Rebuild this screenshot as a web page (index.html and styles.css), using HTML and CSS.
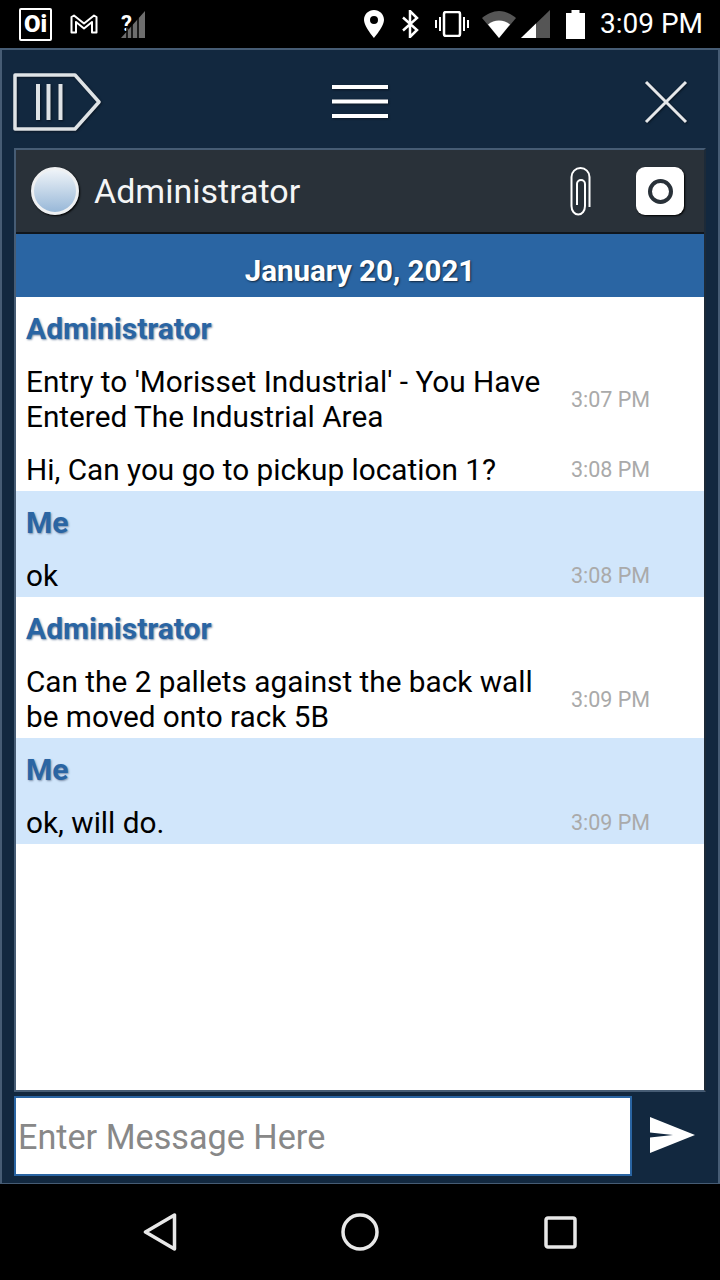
FILE: index.html
```html
<!DOCTYPE html>
<html lang="en">
<head>
    <meta charset="UTF-8">
    <meta name="viewport" content="width=device-width, initial-scale=1.0">
    <title>Messages</title>
    <link rel="stylesheet" href="styles.css">
</head>
<body>
    <div class="status-bar">
        <div class="status-left">
            <div class="oi-badge"><span class="oi-text">Oi</span></div>
            <svg class="icon-gmail" width="28" height="20" viewBox="0 0 28 20"><path d="M1.500 18.500V3L4 1.500 14 9.500 24 1.500 26.500 3V18.500H22V8L14 14.500 6 8V18.500Z" fill="none" stroke="#fff" stroke-width="2" stroke-linejoin="round"/></svg>
            <span class="nosim-mark">?</span>
            <svg class="icon-nosim" width="25" height="28" viewBox="0 0 25 28"><polygon points="1,28 25,1 25,28" fill="#6e6e6e"/><g stroke="#000" stroke-width="1.500"><line x1="7" y1="28" x2="7" y2="18"/><line x1="12" y1="28" x2="12" y2="14"/><line x1="18" y1="28" x2="18" y2="8"/></g></svg>
        </div>
        <div class="status-right">
            <svg width="20" height="28" viewBox="0 0 20 28"><path fill-rule="evenodd" d="M10 0C4.500 0 0 4.300 0 9.800 0 16.500 10 28 10 28S20 16.500 20 9.800C20 4.300 15.500 0 10 0ZM10 6A4 4 0 1 1 10 14 4 4 0 0 1 10 6Z" fill="#fff"/></svg>
            <svg class="gap-bt" width="18" height="28" viewBox="0 0 18 28"><path d="M2 7.500 16 20 9 27V1L16 8 2 20.500" fill="none" stroke="#fff" stroke-width="2.500"/></svg>
            <svg class="gap-vib" width="36" height="26" viewBox="0 0 36 26"><rect x="10" y="1" width="16" height="24" rx="2" fill="none" stroke="#fff" stroke-width="2.500"/><path d="M1 9H3V17H1ZM5 6H7V20H5ZM29 6H31V20H29ZM33 9H35V17H33Z" fill="#fff"/></svg>
            <svg class="gap-wifi" width="34" height="27" viewBox="0 0 34 27"><path d="M17 27 0 7C5 3 11 0 17 0S29 3 34 7Z" fill="#555"/><path d="M17 27 6 13.500C9 11 13 9.500 17 9.500S25 11 28 13.500Z" fill="#fff"/></svg>
            <svg class="gap-signal" width="29" height="28" viewBox="0 0 29 28"><polygon points="0,28 29,0 29,28" fill="#555"/><polygon points="0,28 15,13.500 15,28" fill="#fff"/></svg>
            <svg class="gap-batt" width="19" height="29" viewBox="0 0 19 29"><path d="M5.500 0H13.500V3H19V29H0V3H5.500Z" fill="#fff"/></svg>
            <span class="clock">3:09 PM</span>
        </div>
    </div>

    <div class="app">
        <div class="toolbar">
            <svg class="tool-tab" width="88" height="58" viewBox="0 0 88 58"><path d="M2 2H62L86 29 62 56H2Z" fill="none" stroke="#dfe3e6" stroke-width="3.500" stroke-linejoin="round"/><path d="M25 11V47M35.500 11V47M47.500 11V47" stroke="#dfe3e6" stroke-width="4"/></svg>
            <svg class="tool-menu" width="56" height="34" viewBox="0 0 56 34"><path d="M0 2H56M0 16.500H56M0 31H56" stroke="#fff" stroke-width="4"/></svg>
            <svg class="tool-close" width="44" height="44" viewBox="0 0 44 44"><path d="M2 2 42 42M42 2 2 42" stroke="#e6e8ea" stroke-width="3"/></svg>
        </div>

        <div class="chat-panel">
            <div class="chat-header">
                <div class="avatar"></div>
                <div class="chat-title">Administrator</div>
                <svg class="clip" width="21" height="49" viewBox="0 0 21 49"><path d="M19.500 40V10A9 9 0 0 0 1.500 10V39A6.700 8.500 0 0 0 15 39V17A4 4 0 0 0 7 17V38" fill="none" stroke="#fff" stroke-width="2"/></svg>
                <div class="camera-btn"><div class="camera-lens"></div></div>
            </div>
            <div class="date-bar">January 20, 2021</div>

            <div class="messages">
                <div class="group">
                    <div class="sender">Administrator</div>
                    <div class="msg"><div class="msg-text">Entry to 'Morisset Industrial' - You Have Entered The Industrial Area</div><div class="msg-time">3:07 PM</div></div>
                    <div class="msg"><div class="msg-text">Hi, Can you go to pickup location 1?</div><div class="msg-time">3:08 PM</div></div>
                </div>
                <div class="group mine">
                    <div class="sender">Me</div>
                    <div class="msg"><div class="msg-text">ok</div><div class="msg-time">3:08 PM</div></div>
                </div>
                <div class="group">
                    <div class="sender">Administrator</div>
                    <div class="msg"><div class="msg-text">Can the 2 pallets against the back wall be moved onto rack 5B</div><div class="msg-time">3:09 PM</div></div>
                </div>
                <div class="group mine">
                    <div class="sender">Me</div>
                    <div class="msg"><div class="msg-text">ok, will do.</div><div class="msg-time">3:09 PM</div></div>
                </div>
            </div>
        </div>

        <div class="composer">
            <input class="message-input" type="text" placeholder="Enter Message Here">
            <svg class="send" width="46" height="36" viewBox="0 0 46 36"><path d="M1 0 46 18 1 36V20.500L24 18 1 15.500Z" fill="#fff"/></svg>
        </div>
    </div>

    <div class="nav-bar">
        <div class="nav-item"><svg width="34" height="38" viewBox="0 0 34 38"><path d="M31.500 2V36L2.500 19Z" fill="none" stroke="#e8e8e8" stroke-width="3.500" stroke-linejoin="round"/></svg></div>
        <div class="nav-item"><svg width="38" height="38" viewBox="0 0 38 38"><circle cx="19" cy="19" r="17" fill="none" stroke="#e8e8e8" stroke-width="3.500"/></svg></div>
        <div class="nav-item"><svg width="33" height="33" viewBox="0 0 33 33"><rect x="2" y="2" width="29" height="29" rx="2" fill="none" stroke="#e8e8e8" stroke-width="3.500"/></svg></div>
    </div>
</body>
</html>
```

FILE: styles.css
```css
* {
    box-sizing: border-box;
}

body {
    font-family: Roboto, "Liberation Sans", sans-serif;
    background-color: #000;
    margin: 0;
    width: 720px;
    height: 1280px;
    display: flex;
    flex-direction: column;
    overflow: hidden;
}

/* status bar */
.status-bar {
    height: 48px;
    flex: none;
    display: flex;
    justify-content: space-between;
    align-items: center;
    padding: 0 17px 0 19px;
    background-color: #000;
}

.status-left,
.status-right {
    display: flex;
    align-items: center;
}

.oi-badge {
    width: 33px;
    height: 33px;
    border: 2px solid #fff;
    border-radius: 2px;
    display: flex;
    align-items: center;
    justify-content: center;
}

.oi-text {
    color: #fff;
    font-size: 24px;
    font-weight: 900;
    line-height: 1;
}

.icon-gmail {
    margin-left: 18px;
}

.nosim-mark {
    margin-left: 23px;
    align-self: flex-start;
    color: #fff;
    font-size: 22px;
    font-weight: 700;
    line-height: 36px;
}

.icon-nosim {
    margin-left: -12px;
}

.gap-bt {
    margin-left: 17px;
}

.gap-vib {
    margin-left: 15px;
}

.gap-wifi {
    margin-left: 12px;
}

.gap-signal {
    margin-left: 5px;
}

.gap-batt {
    margin-left: 16px;
}

.clock {
    margin-left: 15px;
    color: #fff;
    font-size: 28px;
    line-height: 1;
}

/* app frame */
.app {
    height: 1136px;
    flex: none;
    background-color: #12283f;
    border: 2px solid #465c74;
    border-bottom-width: 1px;
    display: flex;
    flex-direction: column;
}

.toolbar {
    height: 98px;
    flex: none;
    display: grid;
    grid-template-columns: 1fr auto 1fr;
    align-items: center;
    padding: 6px 11px 0 11px;
}

.toolbar svg {
    filter: drop-shadow(1px 1px 1px #0a1624);
}

.tool-close {
    justify-self: end;
    margin-right: 19px;
}

.chat-panel {
    height: 944px;
    flex: none;
    margin: 0 12px;
    background-color: #fff;
    border: 2px solid #465c74;
    border-right-color: #1c2a38;
    display: flex;
    flex-direction: column;
}

.chat-header {
    height: 84px;
    flex: none;
    background-color: #293139;
    border-bottom: 2px solid #10161c;
    display: flex;
    align-items: center;
    padding: 0 20px 0 15px;
}

.avatar {
    width: 48px;
    height: 48px;
    border-radius: 50%;
    border: 3px solid #eef0f2;
    background: linear-gradient(#eef3f8, #98b8d8);
    box-shadow: 1px 1px 2px #000;
}

.chat-title {
    margin-left: 15px;
    flex: 1;
    color: #f4f5f6;
    font-size: 34px;
}

.clip {
    margin-right: 45px;
}

.camera-btn {
    width: 48px;
    height: 48px;
    border-radius: 9px;
    background-color: #fff;
    box-shadow: 1px 1px 2px #000;
    display: flex;
    align-items: center;
    justify-content: center;
}

.camera-lens {
    width: 25px;
    height: 25px;
    border-radius: 50%;
    border: 4px solid #293139;
}

.date-bar {
    height: 63px;
    flex: none;
    background-color: #2a65a3;
    color: #fff;
    font-size: 29.5px;
    font-weight: 700;
    text-align: center;
    line-height: 74px;
    text-shadow: 1px 1px 2px #12283f;
}

/* message list */
.group {
    padding: 15px 54px 4px 10px;
    display: flex;
    flex-direction: column;
    gap: 18px;
}

.mine {
    background-color: #d1e6fb;
}

.sender {
    height: 34px;
    line-height: 34px;
    color: #2a65a3;
    font-size: 30px;
    font-weight: 700;
    text-shadow: 1px 1px 2px #7d8fa8;
}

.msg {
    display: flex;
    align-items: center;
}

.msg-text {
    width: 530px;
    color: #000;
    font-size: 29.75px;
    line-height: 35px;
}

.msg-time {
    margin-left: auto;
    color: #aaa;
    font-size: 21.5px;
    white-space: nowrap;
}

/* composer */
.composer {
    flex: 1;
    display: flex;
    align-items: flex-start;
    padding: 4px 23px 0 12px;
    justify-content: space-between;
}

.message-input {
    width: 618px;
    height: 80px;
    border: 2px solid #2a65a3;
    background-color: #fff;
    padding: 2px 2px 0;
    font-family: Roboto, sans-serif;
    font-size: 34.2px;
    outline: none;
}

.message-input::placeholder {
    color: #888;
    opacity: 1;
}

.send {
    margin-top: 21px;
}

/* nav bar */
.nav-bar {
    flex: 1;
    display: flex;
    justify-content: center;
    align-items: center;
    background-color: #000;
}

.nav-item {
    width: 200px;
    display: flex;
    justify-content: center;
}
```
